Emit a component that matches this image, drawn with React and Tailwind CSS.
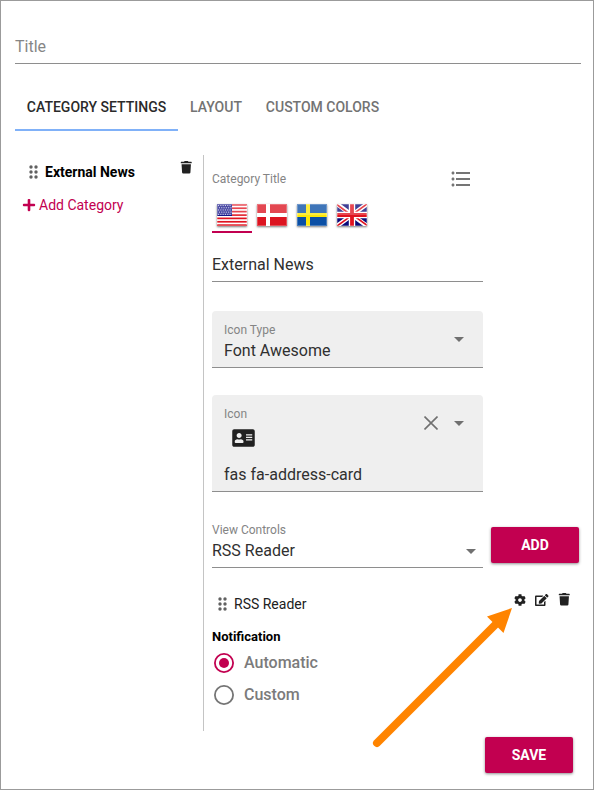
import { FaAddressCard, FaCog, FaEdit, FaPlus, FaTrash } from "react-icons/fa";
import { MdArrowDropDown, MdFormatListBulleted } from "react-icons/md";

function Grip() {
  return (
    <svg width="9" height="14" viewBox="0 0 9 14" fill="#616161" className="shrink-0">
      {[2, 7, 12].map((y) => (
        <g key={y}>
          <circle cx="2" cy={y} r="1.7" />
          <circle cx="7" cy={y} r="1.7" />
        </g>
      ))}
    </svg>
  );
}

function Gloss() {
  return (
    <>
      <rect width="30" height="11" fill="#fff" opacity="0.22" />
      <rect x="0.5" y="0.5" width="29" height="21" fill="none" stroke="#fff" strokeOpacity="0.25" />
    </>
  );
}

function UsFlag() {
  return (
    <>
      <rect width="30" height="22" fill="#fff" />
      {[0, 1, 2, 3, 4, 5, 6].map((i) => (
        <rect key={i} y={i * 3.385} width="30" height="1.7" fill="#e0121f" />
      ))}
      <rect width="15" height="12" fill="#15158a" />
      {[0, 1, 2, 3, 4].map((r) =>
        [0, 1, 2, 3, 4, 5].map((c) => (
          <rect key={`${r}-${c}`} x={1 + c * 2.3 + (r % 2) * 0.9} y={1 + r * 2.2} width="1.1" height="1.1" fill="#fff" opacity="0.75" />
        ))
      )}
    </>
  );
}

function CrossFlag({ field, cross }) {
  return (
    <>
      <rect width="30" height="22" fill={field} />
      <path d="M9 0h4v22h-4z M0 9h30v4h-30z" fill={cross} />
    </>
  );
}

function UkFlag() {
  return (
    <>
      <rect width="30" height="22" fill="#0a0a78" />
      <path d="M0 0L30 22M30 0L0 22" stroke="#fff" strokeWidth="4.4" />
      <path d="M0 0.8L12 9.5M30 0L18 8.6M0 22L12 13.4M30 21.2L18 12.6" stroke="#e0121f" strokeWidth="1.7" />
      <path d="M15 0V22M0 11H30" stroke="#fff" strokeWidth="6.4" />
      <path d="M15 0V22M0 11H30" stroke="#e0121f" strokeWidth="3.8" />
    </>
  );
}

function FlagTab({ active, children }) {
  return (
    <div className={`flex h-8 w-10 justify-center border-b-2 pt-[3px] ${active ? "border-[#c20050]" : "border-transparent"}`}>
      <svg width="30" height="22" viewBox="0 0 30 22" className="shadow-[0_1px_2px_rgba(0,0,0,0.5)]">
        {children}
        <Gloss />
      </svg>
    </div>
  );
}

function Button({ children }) {
  return (
    <button className="h-9 w-[88px] rounded-[2px] bg-[#c20050] text-sm font-bold text-white shadow-[0_1px_3px_rgba(0,0,0,0.45)]">
      {children}
    </button>
  );
}

function Radio({ checked, label }) {
  return (
    <label className="flex h-8 items-center gap-[9px] pl-px">
      <svg width="22" height="22" viewBox="0 0 22 22" fill="none">
        <circle cx="11" cy="11" r="9.1" stroke={checked ? "#c20050" : "#757575"} strokeWidth="1.8" />
        {checked && <circle cx="11" cy="11" r="5" fill="#c20050" />}
      </svg>
      <span className="text-base font-medium text-[#7b7b7b]">{label}</span>
    </label>
  );
}

export default function App() {
  return (
    <div className="relative flex h-[790px] w-[594px] flex-col border border-[#9b9b9b] bg-white pl-[14px] font-[Roboto,sans-serif] text-[#212121]">
      <div className="mt-[28px] box-content flex h-[32px] w-[566px] shrink-0 items-center border-b border-[#8e8e8e] pt-[2px] text-base text-[#868686]">
        Title
      </div>

      <nav className="mt-[19px] flex h-12 shrink-0 text-sm font-medium text-[#737373]">
        <span className="flex w-[163px] items-center justify-center border-b-2 border-[#80b1f8] pt-[2px] text-[#2a2a2a]">CATEGORY SETTINGS</span>
        <span className="flex w-[76px] items-center justify-center">LAYOUT</span>
        <span className="flex w-[137px] items-center justify-center">CUSTOM COLORS</span>
      </nav>

      <div className="mt-[24px] flex h-[576px] shrink-0">
        <aside className="w-[188px] shrink-0 pt-[6px]">
          <div className="flex h-[22px] pl-[14px]">
            <div className="flex flex-1 items-center gap-[7px] text-sm font-bold text-black">
              <Grip />
              External News
            </div>
            <FaTrash size={12.5} className="mr-[11px]" />
          </div>
          <div className="mt-[11px] flex h-[22px] items-center gap-[3px] pl-[7px] text-sm text-[#c20050]">
            <FaPlus size={14} />
            Add Category
          </div>
        </aside>

        <main className="flex w-[377px] flex-col border-l border-[#c4c4c4] pl-[8px]">
          <div className="flex h-12 w-[271px] items-center justify-between pr-[10px]">
            <span className="text-xs text-[#848484]">Category Title</span>
            <MdFormatListBulleted size={24} color="#757575" />
          </div>
          <div className="-mt-[2px] flex">
            <FlagTab active><UsFlag /></FlagTab>
            <FlagTab><CrossFlag field="#dc1420" cross="#fff" /></FlagTab>
            <FlagTab><CrossFlag field="#0a4fa5" cross="#fde80a" /></FlagTab>
            <FlagTab><UkFlag /></FlagTab>
          </div>
          <div className="mt-[14px] flex h-[35px] w-[271px] items-center border-b border-[#8e8e8e] pt-[2px] text-[#303030]">External News</div>

          <div className="mt-[29px] flex h-[57px] w-[271px] justify-between rounded-t border-b border-[#8e8e8e] bg-[#efefef] pl-3 pr-3">
            <div className="flex flex-col">
              <span className="mt-[11px] text-xs leading-4 text-[#848484]">Icon Type</span>
              <span className="mt-px leading-6 text-[#303030]">Font Awesome</span>
            </div>
            <MdArrowDropDown size={24} color="#707070" className="mt-[16px]" />
          </div>

          <div className="mt-[27px] flex h-[97px] w-[271px] justify-between rounded-t border-b border-[#8e8e8e] bg-[#efefef] pl-3 pr-3">
            <div className="flex flex-col">
              <span className="mt-[11px] text-xs leading-4 text-[#848484]">Icon</span>
              <FaAddressCard className="ml-[8px] mt-[6px] h-5 w-[23px]" />
              <span className="mt-[15px] leading-6 text-[#303030]">fas fa-address-card</span>
            </div>
            <div className="mt-[16px] flex h-6 items-center gap-[9px]">
              <svg width="14" height="14" viewBox="0 0 14 14" stroke="#707070" strokeWidth="1.6">
                <path d="M0.5 0.5L13.5 13.5M13.5 0.5L0.5 13.5" />
              </svg>
              <MdArrowDropDown size={24} color="#707070" />
            </div>
          </div>

          <div className="mt-[30px] flex gap-2">
            <div className="flex h-[46px] w-[271px] shrink-0 justify-between border-b border-[#8e8e8e]">
              <div className="flex flex-col">
                <span className="text-xs leading-4 text-[#848484]">View Controls</span>
                <span className="mt-px leading-6 text-[#303030]">RSS Reader</span>
              </div>
              <MdArrowDropDown size={24} color="#707070" className="mt-[17px]" />
            </div>
            <div className="mt-[5px]">
              <Button>ADD</Button>
            </div>
          </div>

          <div className="mt-[25px] flex h-[22px] items-center gap-[7px] pl-[6px] text-sm">
            <Grip />
            RSS Reader
            <div className="mb-[9px] ml-auto flex items-center gap-[9px] pr-[10px]">
              <FaCog size={12} />
              <FaEdit className="h-3 w-[13.5px]" />
              <FaTrash size={12.5} />
            </div>
          </div>
          <span className="mt-[12px] text-[13px] font-bold leading-5 text-black">Notification</span>
          <div>
            <Radio checked label="Automatic" />
            <Radio label="Custom" />
          </div>
        </main>
      </div>

      <div className="mt-[6px] flex justify-end pr-[20px]">
        <Button>SAVE</Button>
      </div>

      <svg className="pointer-events-none absolute left-[360px] top-[595px]" width="170" height="160" viewBox="361 596 170 160">
        <path d="M377 743L499 621" stroke="#ff8400" strokeWidth="8" strokeLinecap="round" />
        <path d="M512 608L487 616.5L503.500 633Z" fill="#ff8400" />
      </svg>
    </div>
  );
}
